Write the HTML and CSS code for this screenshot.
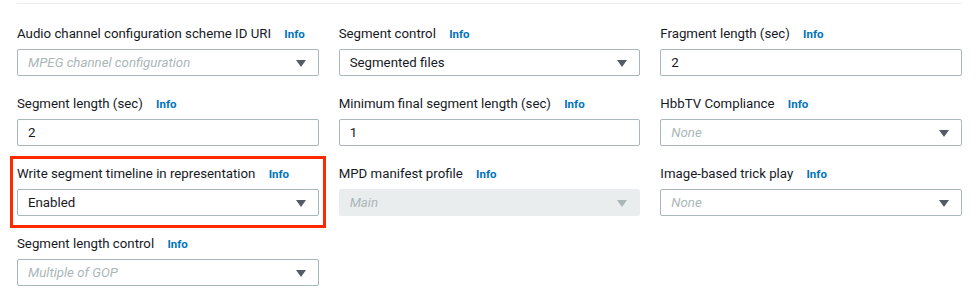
FILE: index.html
```html
<!DOCTYPE html>
<html lang="en">
  <head>
    <meta charset="UTF-8" />
    <meta name="viewport" content="width=device-width, initial-scale=1.0" />
    <link rel="stylesheet" href="styles.css">
    <title>DASH settings</title>
  </head>
  <body>
    <div class="settings">
      <div class="settings-grid">
        <div class="field">
          <div class="field-label">Audio channel configuration scheme ID URI <a class="info">Info</a></div>
          <div class="select placeholder">MPEG channel configuration<span class="caret"></span></div>
        </div>
        <div class="field">
          <div class="field-label">Segment control <a class="info">Info</a></div>
          <div class="select">Segmented files<span class="caret"></span></div>
        </div>
        <div class="field">
          <div class="field-label">Fragment length (sec) <a class="info">Info</a></div>
          <div class="input">2</div>
        </div>

        <div class="field">
          <div class="field-label">Segment length (sec) <a class="info">Info</a></div>
          <div class="input">2</div>
        </div>
        <div class="field">
          <div class="field-label">Minimum final segment length (sec) <a class="info">Info</a></div>
          <div class="input">1</div>
        </div>
        <div class="field">
          <div class="field-label">HbbTV Compliance <a class="info">Info</a></div>
          <div class="select placeholder">None<span class="caret"></span></div>
        </div>

        <div class="field highlighted">
          <div class="field-label">Write segment timeline in representation <a class="info">Info</a></div>
          <div class="select">Enabled<span class="caret"></span></div>
        </div>
        <div class="field">
          <div class="field-label">MPD manifest profile <a class="info">Info</a></div>
          <div class="select placeholder disabled">Main<span class="caret"></span></div>
        </div>
        <div class="field">
          <div class="field-label">Image-based trick play <a class="info">Info</a></div>
          <div class="select placeholder">None<span class="caret"></span></div>
        </div>

        <div class="field">
          <div class="field-label">Segment length control <a class="info">Info</a></div>
          <div class="select placeholder">Multiple of GOP<span class="caret"></span></div>
        </div>
      </div>
    </div>
  </body>
</html>
```

FILE: styles.css
```css
* {
  margin: 0;
  padding: 0;
  box-sizing: border-box;
}
body {
  background: white;
  font-family: Roboto, "Liberation Sans", sans-serif;
  color: #16191f;
}
.settings {
  margin: 3px 15px 0 17px;
  border-top: 1px solid #eaeded;
  padding-top: 20px;
}
.settings-grid {
  display: grid;
  grid-template-columns: repeat(3, 1fr);
  column-gap: 20px;
  row-gap: 18px;
}
.field {
  position: relative;
  display: flex;
  flex-flow: column;
  gap: 5px;
}
.field-label {
  font-size: 13.25px;
  line-height: 20px;
  height: 20px;
  white-space: nowrap;
}
.info {
  margin-left: 10px;
  font-size: 11.5px;
  font-weight: bold;
  color: #0073bb;
}
.input,
.select {
  position: relative;
  height: 27px;
  border: 1px solid #aab7b8;
  border-radius: 2px;
  padding: 0 10px;
  font-size: 13.25px;
  line-height: 25px;
}
.placeholder {
  color: #aab7b8;
  font-style: italic;
}
.disabled {
  background: #eaeded;
  border-color: #eaeded;
}
.caret {
  position: absolute;
  right: 12px;
  top: 10px;
  border-left: 5px solid transparent;
  border-right: 5px solid transparent;
  border-top: 7px solid #545b64;
}
.disabled .caret {
  border-top-color: #aab7b8;
}
.highlighted::after {
  content: "";
  position: absolute;
  top: -8px;
  left: -7px;
  right: -7px;
  bottom: -12px;
  border: 3px solid #ff2a00;
}
```
